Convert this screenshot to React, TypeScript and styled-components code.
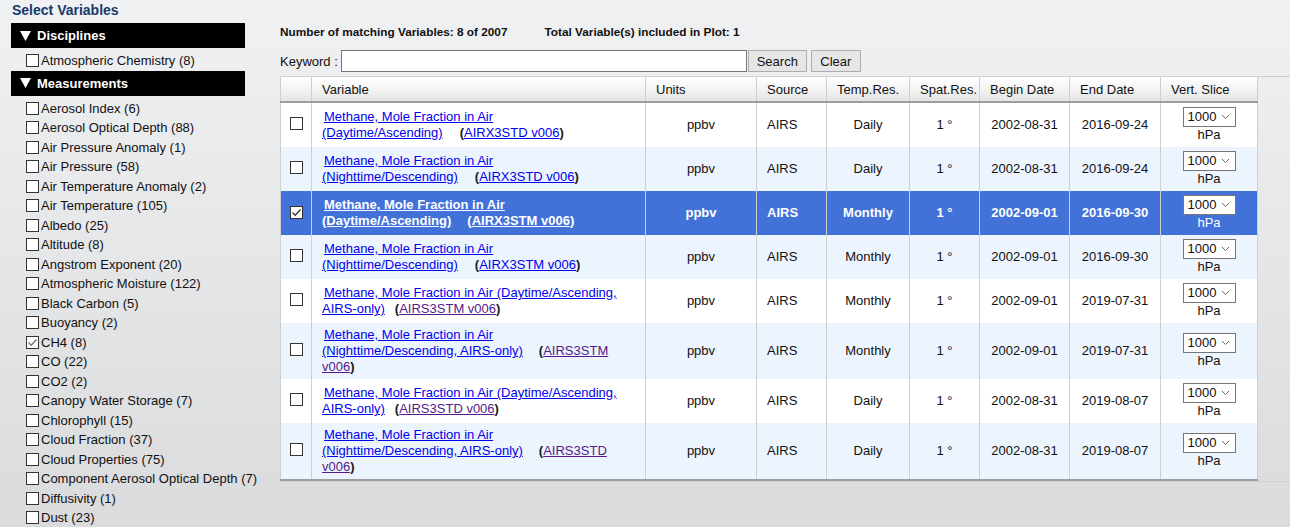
import React from 'react';
import styled, { createGlobalStyle } from 'styled-components';

const GlobalStyle = createGlobalStyle`
  html, body { margin: 0; padding: 0; height: 100%; overflow: hidden; }
  body {
    font-family: "Liberation Sans", Arial, sans-serif;
    font-size: 13px;
    color: #111;
    background: linear-gradient(to bottom, #f0f1f3 0%, #dadbdd 100%);
  }
  #root { height: 100%; }
`;

const Page = styled.div`
  display: grid;
  grid-template-columns: 280px 1fr;
  height: 100%;
`;

const Sidebar = styled.aside`
  padding: 2px 0 0 11px;
  overflow: hidden;
`;

const Title = styled.div`
  font-size: 14px;
  line-height: 16px;
  font-weight: bold;
  color: #173a6b;
  padding-left: 1px;
`;

const SectionHeader = styled.div`
  margin-top: ${(p: { $first?: boolean }) => (p.$first ? '5px' : '0')};
  width: 234px;
  height: 25px;
  background: #000;
  color: #fff;
  font-weight: bold;
  font-size: 13px;
  display: flex;
  align-items: center;
  gap: 6px;
  padding-left: 9px;
  box-sizing: border-box;
`;

const ItemList = styled.div`
  padding: 3px 0 0 15px;
`;

const Item = styled.label`
  height: 19.5px;
  display: flex;
  align-items: center;
  gap: 2px;
  white-space: nowrap;
  color: #111;
`;

const Box = styled.span`
  width: 13px;
  height: 13px;
  box-sizing: border-box;
  border: 1px solid #333;
  background: #fff;
  display: inline-flex;
  align-items: center;
  justify-content: center;
  flex: none;
  svg { display: block; }
`;

const Main = styled.main`
  padding-top: 25px;
  min-width: 0;
`;

const InfoLine = styled.div`
  display: flex;
  gap: 37px;
  font-size: 11.8px;
  line-height: 14px;
  font-weight: bold;
  color: #111;
`;

const KeywordRow = styled.div`
  margin-top: 11px;
  height: 22px;
  display: flex;
  align-items: center;
`;

const KeywordLabel = styled.span`
  margin-right: 3px;
`;

const KeywordInput = styled.input`
  width: 406px;
  height: 22px;
  box-sizing: border-box;
  border: 1px solid #767676;
  background: #fff;
  padding: 0 3px;
  font: inherit;
  outline: none;
`;

const Button = styled.button<{ $w: number; $ml: number }>`
  width: ${(p) => p.$w}px;
  margin-left: ${(p) => p.$ml}px;
  height: 22px;
  box-sizing: border-box;
  border: 1px solid #adadad;
  background: #e6e6e6;
  font-family: "Liberation Sans", Arial, sans-serif;
  font-size: 13px;
  color: #111;
  padding: 0;
`;

const TableWrap = styled.div`
  margin-top: 4px;
  border-top: 1px solid #cfcfcf;
  border-bottom: 1px solid #cfcfcf;
`;

const Table = styled.table`
  width: 977px;
  table-layout: fixed;
  border-collapse: collapse;
  border-left: 1px solid #cfcfcf;
  border-bottom: 2px solid #9d9d9d;
`;

const Th = styled.th`
  height: 25px;
  padding: 0 0 0 10px;
  text-align: left;
  font-weight: normal;
  font-size: 13px;
  color: #111;
  background: linear-gradient(to bottom, #ffffff 0%, #f3f3f3 50%, #e4e4e4 100%);
  border-right: 1px solid #cfcfcf;
  border-bottom: 2px solid #9d9d9d;
  white-space: nowrap;
  box-sizing: border-box;
`;

const Tr = styled.tr<{ $variant: 'odd' | 'even' | 'selected' }>`
  background: ${(p) => (p.$variant === 'selected' ? '#4271d8' : p.$variant === 'even' ? '#ecf4fd' : '#ffffff')};
  color: ${(p) => (p.$variant === 'selected' ? '#fff' : '#111')};
  font-weight: ${(p) => (p.$variant === 'selected' ? 'bold' : 'normal')};
  a { color: ${(p) => (p.$variant === 'selected' ? '#fff' : '')}; }
`;

const Td = styled.td<{ $align?: string }>`
  padding: 4px 10px;
  line-height: 16px;
  text-align: ${(p) => p.$align || 'center'};
  vertical-align: middle;
  border-right: 1px solid #cfcfcf;
  white-space: nowrap;
`;

const CheckTd = styled.td`
  padding: 0;
  border-right: 1px solid #cfcfcf;
  vertical-align: middle;
  text-align: center;
  & > span { margin: 0 auto; }
`;

const VarTd = styled.td`
  padding: 4px 10px;
  line-height: 16px;
  text-align: left;
  vertical-align: middle;
  border-right: 1px solid #cfcfcf;
  white-space: nowrap;
  text-indent: 2px;
`;

const VarLink = styled.a`
  color: #0000ee;
  text-decoration: underline;
`;

const ProdLink = styled.a<{ $visited?: boolean }>`
  color: ${(p) => (p.$visited ? '#551a8b' : '#0000ee')};
  text-decoration: underline;
`;

const Paren = styled.span`
  font-weight: bold;
  color: #1a1a1a;
  tr[data-sel='1'] & { color: #fff; }
`;

const Gap = styled.span<{ $w: number }>`
  display: inline-block;
  width: ${(p) => p.$w}px;
`;

const SliceCell = styled.div`
  display: flex;
  flex-direction: column;
  align-items: center;
`;

const SliceSelect = styled.div`
  width: 53px;
  height: 20px;
  box-sizing: border-box;
  border: 1px solid #767676;
  background: #fff;
  color: #111;
  font-weight: normal;
  display: flex;
  align-items: center;
  justify-content: space-between;
  padding: 0 5px 0 4px;
  font-size: 13px;
`;

const Unit = styled.div`
  line-height: 16px;
  font-weight: normal;
`;

const Check = ({ color }: { color: string }) => (
  <svg width="11" height="11" viewBox="0 0 11 11">
    <polyline points="1.5,5.5 4.2,8.2 9.5,2.5" fill="none" stroke={color} strokeWidth="1.3" />
  </svg>
);

const Checkbox = ({ checked, color = '#777' }: { checked?: boolean; color?: string }) => (
  <Box>{checked ? <Check color={color} /> : null}</Box>
);

const Triangle = () => (
  <svg width="11" height="10" viewBox="0 0 11 10">
    <polygon points="0,0 11,0 5.5,10" fill="#fff" />
  </svg>
);

const Chevron = () => (
  <svg width="9" height="6" viewBox="0 0 9 6">
    <polyline points="1,1 4.5,4.5 8,1" fill="none" stroke="#666" strokeWidth="1" />
  </svg>
);

const measurements: [string, boolean?][] = [
  ['Aerosol Index (6)'],
  ['Aerosol Optical Depth (88)'],
  ['Air Pressure Anomaly (1)'],
  ['Air Pressure (58)'],
  ['Air Temperature Anomaly (2)'],
  ['Air Temperature (105)'],
  ['Albedo (25)'],
  ['Altitude (8)'],
  ['Angstrom Exponent (20)'],
  ['Atmospheric Moisture (122)'],
  ['Black Carbon (5)'],
  ['Buoyancy (2)'],
  ['CH4 (8)', true],
  ['CO (22)'],
  ['CO2 (2)'],
  ['Canopy Water Storage (7)'],
  ['Chlorophyll (15)'],
  ['Cloud Fraction (37)'],
  ['Cloud Properties (75)'],
  ['Component Aerosol Optical Depth (7)'],
  ['Diffusivity (1)'],
  ['Dust (23)'],
];

type Row = {
  name: string[];
  prod: string[];
  gap: number;
  visited?: boolean;
  temp: string;
  begin: string;
  end: string;
  selected?: boolean;
};

const rows: Row[] = [
  { name: ['Methane, Mole Fraction in Air', '(Daytime/Ascending)'], prod: ['AIRX3STD v006'], gap: 17, temp: 'Daily', begin: '2002-08-31', end: '2016-09-24' },
  { name: ['Methane, Mole Fraction in Air', '(Nighttime/Descending)'], prod: ['AIRX3STD v006'], gap: 17, temp: 'Daily', begin: '2002-08-31', end: '2016-09-24' },
  { name: ['Methane, Mole Fraction in Air', '(Daytime/Ascending)'], prod: ['AIRX3STM v006'], gap: 16, temp: 'Monthly', begin: '2002-09-01', end: '2016-09-30', selected: true },
  { name: ['Methane, Mole Fraction in Air', '(Nighttime/Descending)'], prod: ['AIRX3STM v006'], gap: 17, temp: 'Monthly', begin: '2002-09-01', end: '2016-09-30' },
  { name: ['Methane, Mole Fraction in Air (Daytime/Ascending,', 'AIRS-only)'], prod: ['AIRS3STM v006'], gap: 10, visited: true, temp: 'Monthly', begin: '2002-09-01', end: '2019-07-31' },
  { name: ['Methane, Mole Fraction in Air', '(Nighttime/Descending, AIRS-only)'], prod: ['AIRS3STM', 'v006'], gap: 16, visited: true, temp: 'Monthly', begin: '2002-09-01', end: '2019-07-31' },
  { name: ['Methane, Mole Fraction in Air (Daytime/Ascending,', 'AIRS-only)'], prod: ['AIRS3STD v006'], gap: 10, visited: true, temp: 'Daily', begin: '2002-08-31', end: '2019-08-07' },
  { name: ['Methane, Mole Fraction in Air', '(Nighttime/Descending, AIRS-only)'], prod: ['AIRS3STD', 'v006'], gap: 16, visited: true, temp: 'Daily', begin: '2002-08-31', end: '2019-08-07' },
];

const colWidths = [31, 334, 111, 70, 83, 70, 90, 91, 97];
const headers = ['', 'Variable', 'Units', 'Source', 'Temp.Res.', 'Spat.Res.', 'Begin Date', 'End Date', 'Vert. Slice'];

const withBreaks = (lines: string[]) =>
  lines.map((l, i) => (
    <React.Fragment key={i}>
      {i > 0 && <br />}
      {l}
    </React.Fragment>
  ));

export default function App() {
  return (
    <>
      <GlobalStyle />
      <Page>
        <Sidebar>
          <Title>Select Variables</Title>
          <SectionHeader $first>
            <Triangle />
            Disciplines
          </SectionHeader>
          <ItemList>
            <Item>
              <Checkbox />
              Atmospheric Chemistry (8)
            </Item>
          </ItemList>
          <SectionHeader>
            <Triangle />
            Measurements
          </SectionHeader>
          <ItemList>
            {measurements.map(([label, checked]) => (
              <Item key={label}>
                <Checkbox checked={checked} />
                {label}
              </Item>
            ))}
          </ItemList>
        </Sidebar>
        <Main>
          <InfoLine>
            <span>Number of matching Variables: 8 of 2007</span>
            <span>Total Variable(s) included in Plot: 1</span>
          </InfoLine>
          <KeywordRow>
            <KeywordLabel>Keyword :</KeywordLabel>
            <KeywordInput type="text" />
            <Button $w={59} $ml={1}>Search</Button>
            <Button $w={50} $ml={4}>Clear</Button>
          </KeywordRow>
          <TableWrap>
            <Table>
              <colgroup>
                {colWidths.map((w, i) => (
                  <col key={i} style={{ width: w }} />
                ))}
              </colgroup>
              <thead>
                <tr>
                  {headers.map((h, i) => (
                    <Th key={i}>{h}</Th>
                  ))}
                </tr>
              </thead>
              <tbody>
                {rows.map((r, i) => (
                  <Tr
                    key={i}
                    data-sel={r.selected ? '1' : '0'}
                    $variant={r.selected ? 'selected' : i % 2 === 0 ? 'odd' : 'even'}
                  >
                    <CheckTd>
                      <Checkbox checked={r.selected} color="#333" />
                    </CheckTd>
                    <VarTd>
                      <VarLink href="#">{withBreaks(r.name)}</VarLink>
                      <Gap $w={r.gap} />
                      <Paren>(</Paren>
                      <ProdLink href="#" $visited={r.visited}>
                        {withBreaks(r.prod)}
                      </ProdLink>
                      <Paren>)</Paren>
                    </VarTd>
                    <Td>ppbv</Td>
                    <Td $align="left">AIRS</Td>
                    <Td>{r.temp}</Td>
                    <Td>1 °</Td>
                    <Td>{r.begin}</Td>
                    <Td>{r.end}</Td>
                    <Td>
                      <SliceCell>
                        <SliceSelect>
                          1000
                          <Chevron />
                        </SliceSelect>
                        <Unit>hPa</Unit>
                      </SliceCell>
                    </Td>
                  </Tr>
                ))}
              </tbody>
            </Table>
          </TableWrap>
        </Main>
      </Page>
    </>
  );
}
